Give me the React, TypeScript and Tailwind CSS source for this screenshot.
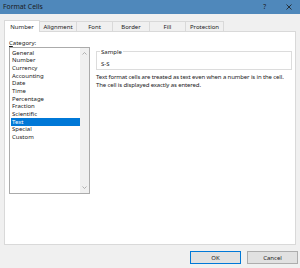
import React from "react";

const items = ["General","Number","Currency","Accounting","Date","Time","Percentage","Fraction","Scientific","Text","Special","Custom"];
const tabs = [
  { label: "Alignment", w: "w-[37px]" },
  { label: "Font", w: "w-[36px]" },
  { label: "Border", w: "w-[37px]" },
  { label: "Fill", w: "w-[36px]" },
  { label: "Protection", w: "w-[38px]" },
];

export default function App() {
  return (
    <div className="w-[300px] h-[268px] bg-[#f0f0f0] flex flex-col font-['Noto_Sans',sans-serif] text-[#1a1a1a] overflow-hidden">
      <div className="h-[14px] bg-[#4f88bb] flex items-center pl-[3px] pr-[8px] text-[6.8px] leading-none">
        <span className="flex-1">Format Cells</span>
        <span className="mr-[20px] text-[6.5px]">?</span>
        <svg width="6" height="6" viewBox="0 0 6 6" className="stroke-[#1a1a1a]"><path d="M0.5 0.5L5.5 5.5M5.5 0.5L0.5 5.5" strokeWidth="0.8" /></svg>
      </div>
      <div className="flex items-end h-[17px] pl-[4px] text-[6px] leading-none">
        <div className="w-[36px] h-[12px] bg-white border border-b-0 border-[#d9d9d9] flex items-center justify-center relative top-[1px] z-10">Number</div>
        {tabs.map((t) => (
          <div key={t.label} className={`${t.w} h-[10px] border border-b-0 border-l-0 border-[#d9d9d9] flex items-center justify-center`}>{t.label}</div>
        ))}
      </div>
      <div className="ml-[4px] w-[292px] h-[214px] bg-white border border-[#d9d9d9] flex text-[6px] leading-none">
        <div className="pl-[4px] pt-[8px] flex flex-col">
          <div className="h-[7px]"><span className="underline">C</span>ategory:</div>
          <div className="mt-[0px] w-[81px] h-[147px] border border-[#ababab] flex">
            <div className="flex-1 pt-[1px] pl-[1px] flex flex-col">
              {items.map((it) => (
                <div key={it} className={`h-[7.67px] flex items-center pl-[1px] ${it === "Text" ? "bg-[#0078d7] text-white" : ""}`}>{it}</div>
              ))}
            </div>
            <div className="w-[9px] bg-[#f0f0f0] flex flex-col items-center justify-between py-[4px]">
              <svg width="5" height="3" viewBox="0 0 5 3"><path d="M0.5 2.5L2.5 0.5L4.5 2.5" fill="none" stroke="#a0a0a0" strokeWidth="0.8" /></svg>
              <svg width="5" height="3" viewBox="0 0 5 3"><path d="M0.5 0.5L2.5 2.5L4.5 0.5" fill="none" stroke="#a0a0a0" strokeWidth="0.8" /></svg>
            </div>
          </div>
        </div>
        <div className="ml-[6px] pt-[19px] flex flex-col">
          <div className="w-[196px] h-[19px] border border-[#dcdcdc] relative">
            <span className="absolute left-[3px] top-[-3px] bg-white px-[1px]">Sample</span>
            <div className="pl-[4px] pt-[9px]">S-S</div>
          </div>
          <div className="mt-[4px] leading-[7.7px] tracking-[-0.12px]">
            <div>Text format cells are treated as text even when a number is in the cell.</div>
            <div>The cell is displayed exactly as entered.</div>
          </div>
        </div>
      </div>
      <div className="flex justify-end gap-[6px] pr-[2px] mt-[6px] text-[6px] leading-none">
        <div className="w-[51px] h-[13px] bg-[#e1e1e1] border border-[#0078d7] flex items-center justify-center">OK</div>
        <div className="w-[51px] h-[13px] bg-[#e1e1e1] border border-[#adadad] flex items-center justify-center">Cancel</div>
      </div>
    </div>
  );
}
